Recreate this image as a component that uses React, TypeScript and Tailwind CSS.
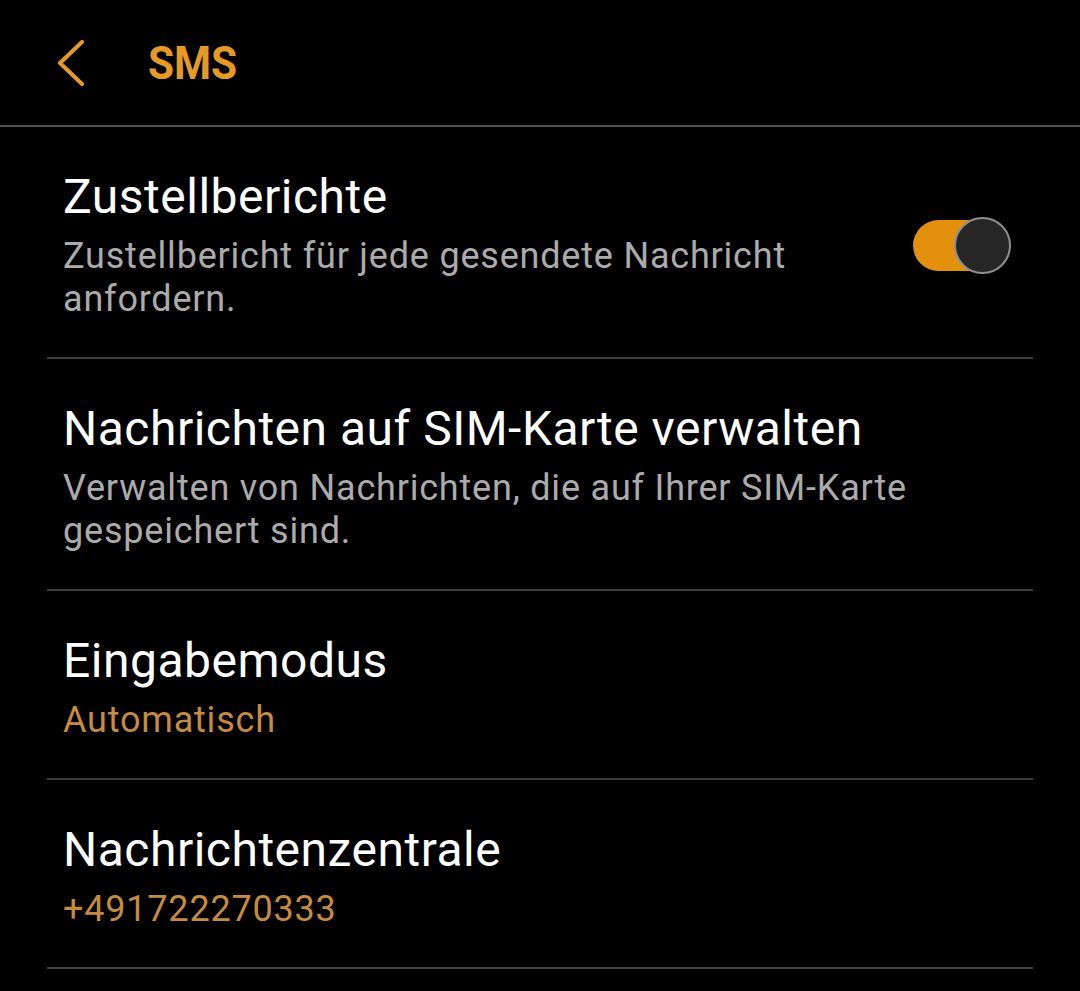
import React from "react";

type Item = {
  title: string;
  summary: string;
  accent?: boolean;
  toggle?: boolean;
};

const items: Item[] = [
  {
    title: "Zustellberichte",
    summary: "Zustellbericht für jede gesendete Nachricht anfordern.",
    toggle: true,
  },
  {
    title: "Nachrichten auf SIM-Karte verwalten",
    summary: "Verwalten von Nachrichten, die auf Ihrer SIM-Karte gespeichert sind.",
  },
  { title: "Eingabemodus", summary: "Automatisch", accent: true },
  { title: "Nachrichtenzentrale", summary: "+491722270333", accent: true },
];

function Toggle() {
  return (
    <div className="relative flex h-[57px] w-[98px] shrink-0 items-center">
      <div className="h-[51px] w-[86px] rounded-full bg-[#e3900f]" />
      <div className="absolute right-0 top-0 h-[57px] w-[57px] rounded-full border-2 border-[#8e8e8e] bg-[#262626]" />
    </div>
  );
}

export default function App() {
  return (
    <div className="min-h-screen w-[1080px] bg-black font-['Roboto',sans-serif]">
      {/* Toolbar */}
      <header className="flex h-[127px] items-center border-b-2 border-[#4f4f4f]">
        <button className="ml-[56px] flex h-[46px] w-[30px] items-center justify-center text-[#e59a25]">
          <svg width="30" height="46" viewBox="0 0 30 46" fill="none">
            <path d="M26 2 L4 23 L26 44" stroke="currentColor" strokeWidth="4" strokeLinecap="round" strokeLinejoin="round" />
          </svg>
        </button>
        <h1 className="ml-[62px] origin-left scale-x-[0.9] text-[47px] font-bold leading-none text-[#e59a25]">SMS</h1>
      </header>

      <ul className="px-[47px]">
        {items.map((item) => (
          <li key={item.title} className="flex items-center border-b-2 border-[#3d3d3d] pl-[16px] pr-[22px] pt-[42px] pb-[36px]">
            <div className="min-w-0 flex-1">
              <div className="text-[48px] leading-[56px] tracking-[0.5px] text-white">{item.title}</div>
              <div
                className={
                  item.accent
                    ? "mt-[10px] text-[36px] leading-[43px] tracking-[0.8px] text-[#c68b3f]"
                    : "mt-[10px] max-w-[850px] text-[36px] leading-[43px] tracking-[0.8px] text-[#ababab]"
                }
              >
                {item.summary}
              </div>
            </div>
            {item.toggle && <Toggle />}
          </li>
        ))}
      </ul>
    </div>
  );
}
